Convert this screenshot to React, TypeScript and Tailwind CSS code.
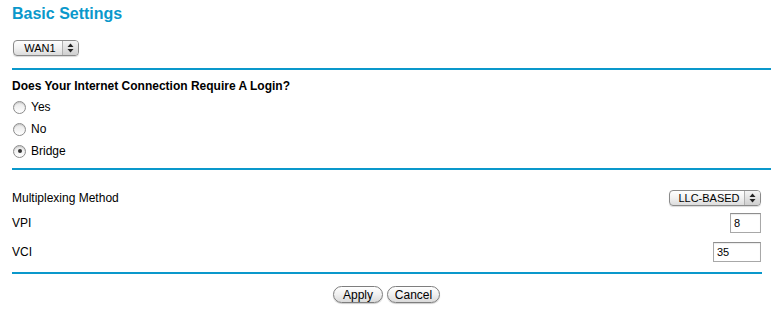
import React from "react";

const font = { fontFamily: '"Liberation Sans", Arial, sans-serif' };

const Arrows = () => (
  <svg width="7" height="10" viewBox="0 0 7 10">
    <path d="M3.5 0.5 L6.5 4 L0.5 4 Z" fill="#222" />
    <path d="M3.5 9.5 L6.5 6 L0.5 6 Z" fill="#222" />
  </svg>
);

const MacSelect = ({ label, width }: { label: string; width: string }) => (
  <div
    className={`flex h-[16px] ${width} items-stretch overflow-hidden rounded-[4px] border border-[#8a8a8a] bg-gradient-to-b from-white via-[#f1f1f1] to-[#dcdcdc] shadow-[0_1px_1px_rgba(0,0,0,0.15)]`}
  >
    <div className="flex flex-1 items-center justify-center pl-1 text-[11px] text-black">{label}</div>
    <div className="flex w-[16px] items-center justify-center border-l border-[#b0b0b0] bg-gradient-to-b from-[#f4f4f4] to-[#cfcfcf]">
      <Arrows />
    </div>
  </div>
);

const Radio = ({ label, checked }: { label: string; checked?: boolean }) => (
  <div className="flex h-[22px] items-center gap-[5px]">
    <span className="ml-[1px] flex h-[13px] w-[13px] items-center justify-center rounded-full border border-[#8c8c8c] bg-gradient-to-b from-[#e6e6e6] to-white shadow-[inset_0_1px_1px_rgba(0,0,0,0.15)]">
      {checked && <span className="h-[4px] w-[4px] rounded-full bg-[#333]" />}
    </span>
    <span className="text-[12px] text-black">{label}</span>
  </div>
);

const Field = ({ value, width }: { value: string; width: string }) => (
  <div className={`flex h-[20px] ${width} items-center border border-[#a8a8a8] border-t-[#8e8e8e] bg-white px-[3px] text-[11px] text-black shadow-[inset_0_1px_1px_rgba(0,0,0,0.08)]`}>
    {value}
  </div>
);

const Button = ({ label, width }: { label: string; width: string }) => (
  <div
    className={`flex h-[17px] ${width} items-center justify-center rounded-full border border-[#7e7e7e] bg-gradient-to-b from-white via-[#f0f0f0] to-[#dadada] text-[12px] text-black shadow-[0_1px_1px_rgba(0,0,0,0.2)]`}
  >
    {label}
  </div>
);

export default function App() {
  return (
    <div className="h-[321px] w-[773px] bg-white pl-[12px] pr-[2px]" style={font}>
      <h1 className="pt-[4px] text-[16px] font-bold leading-[20px] text-[#0a98cb]">Basic Settings</h1>

      <div className="ml-[1px] mt-[16px]">
        <MacSelect label="WAN1" width="w-[66px]" />
      </div>

      <div className="mt-[12px] h-[2px] bg-[#0a98cb]" />

      <div className="pt-[9px]">
        <h2 className="text-[12px] font-bold leading-[14px] text-black">Does Your Internet Connection Require A Login?</h2>
        <div className="mt-[3px] flex flex-col">
          <Radio label="Yes" />
          <Radio label="No" />
          <Radio label="Bridge" checked />
        </div>
      </div>

      <div className="mt-[6px] h-[2px] bg-[#0a98cb]" />

      <div className="flex flex-col pr-[10px] pt-[18px]">
        <div className="flex h-[20px] items-center justify-between">
          <span className="text-[12px] text-black">Multiplexing Method</span>
          <MacSelect label="LLC-BASED" width="w-[92px]" />
        </div>
        <div className="mt-[5px] flex h-[20px] items-center justify-between">
          <span className="text-[12px] text-black">VPI</span>
          <Field value="8" width="w-[31px]" />
        </div>
        <div className="mt-[9px] flex h-[20px] items-center justify-between">
          <span className="text-[12px] text-black">VCI</span>
          <Field value="35" width="w-[48px]" />
        </div>
      </div>

      <div className="mr-[9px] mt-[10px] h-[2px] bg-[#0a98cb]" />

      <div className="mt-[12px] flex justify-center gap-[4px] pr-[10px]">
        <Button label="Apply" width="w-[50px]" />
        <Button label="Cancel" width="w-[53px]" />
      </div>
    </div>
  );
}
